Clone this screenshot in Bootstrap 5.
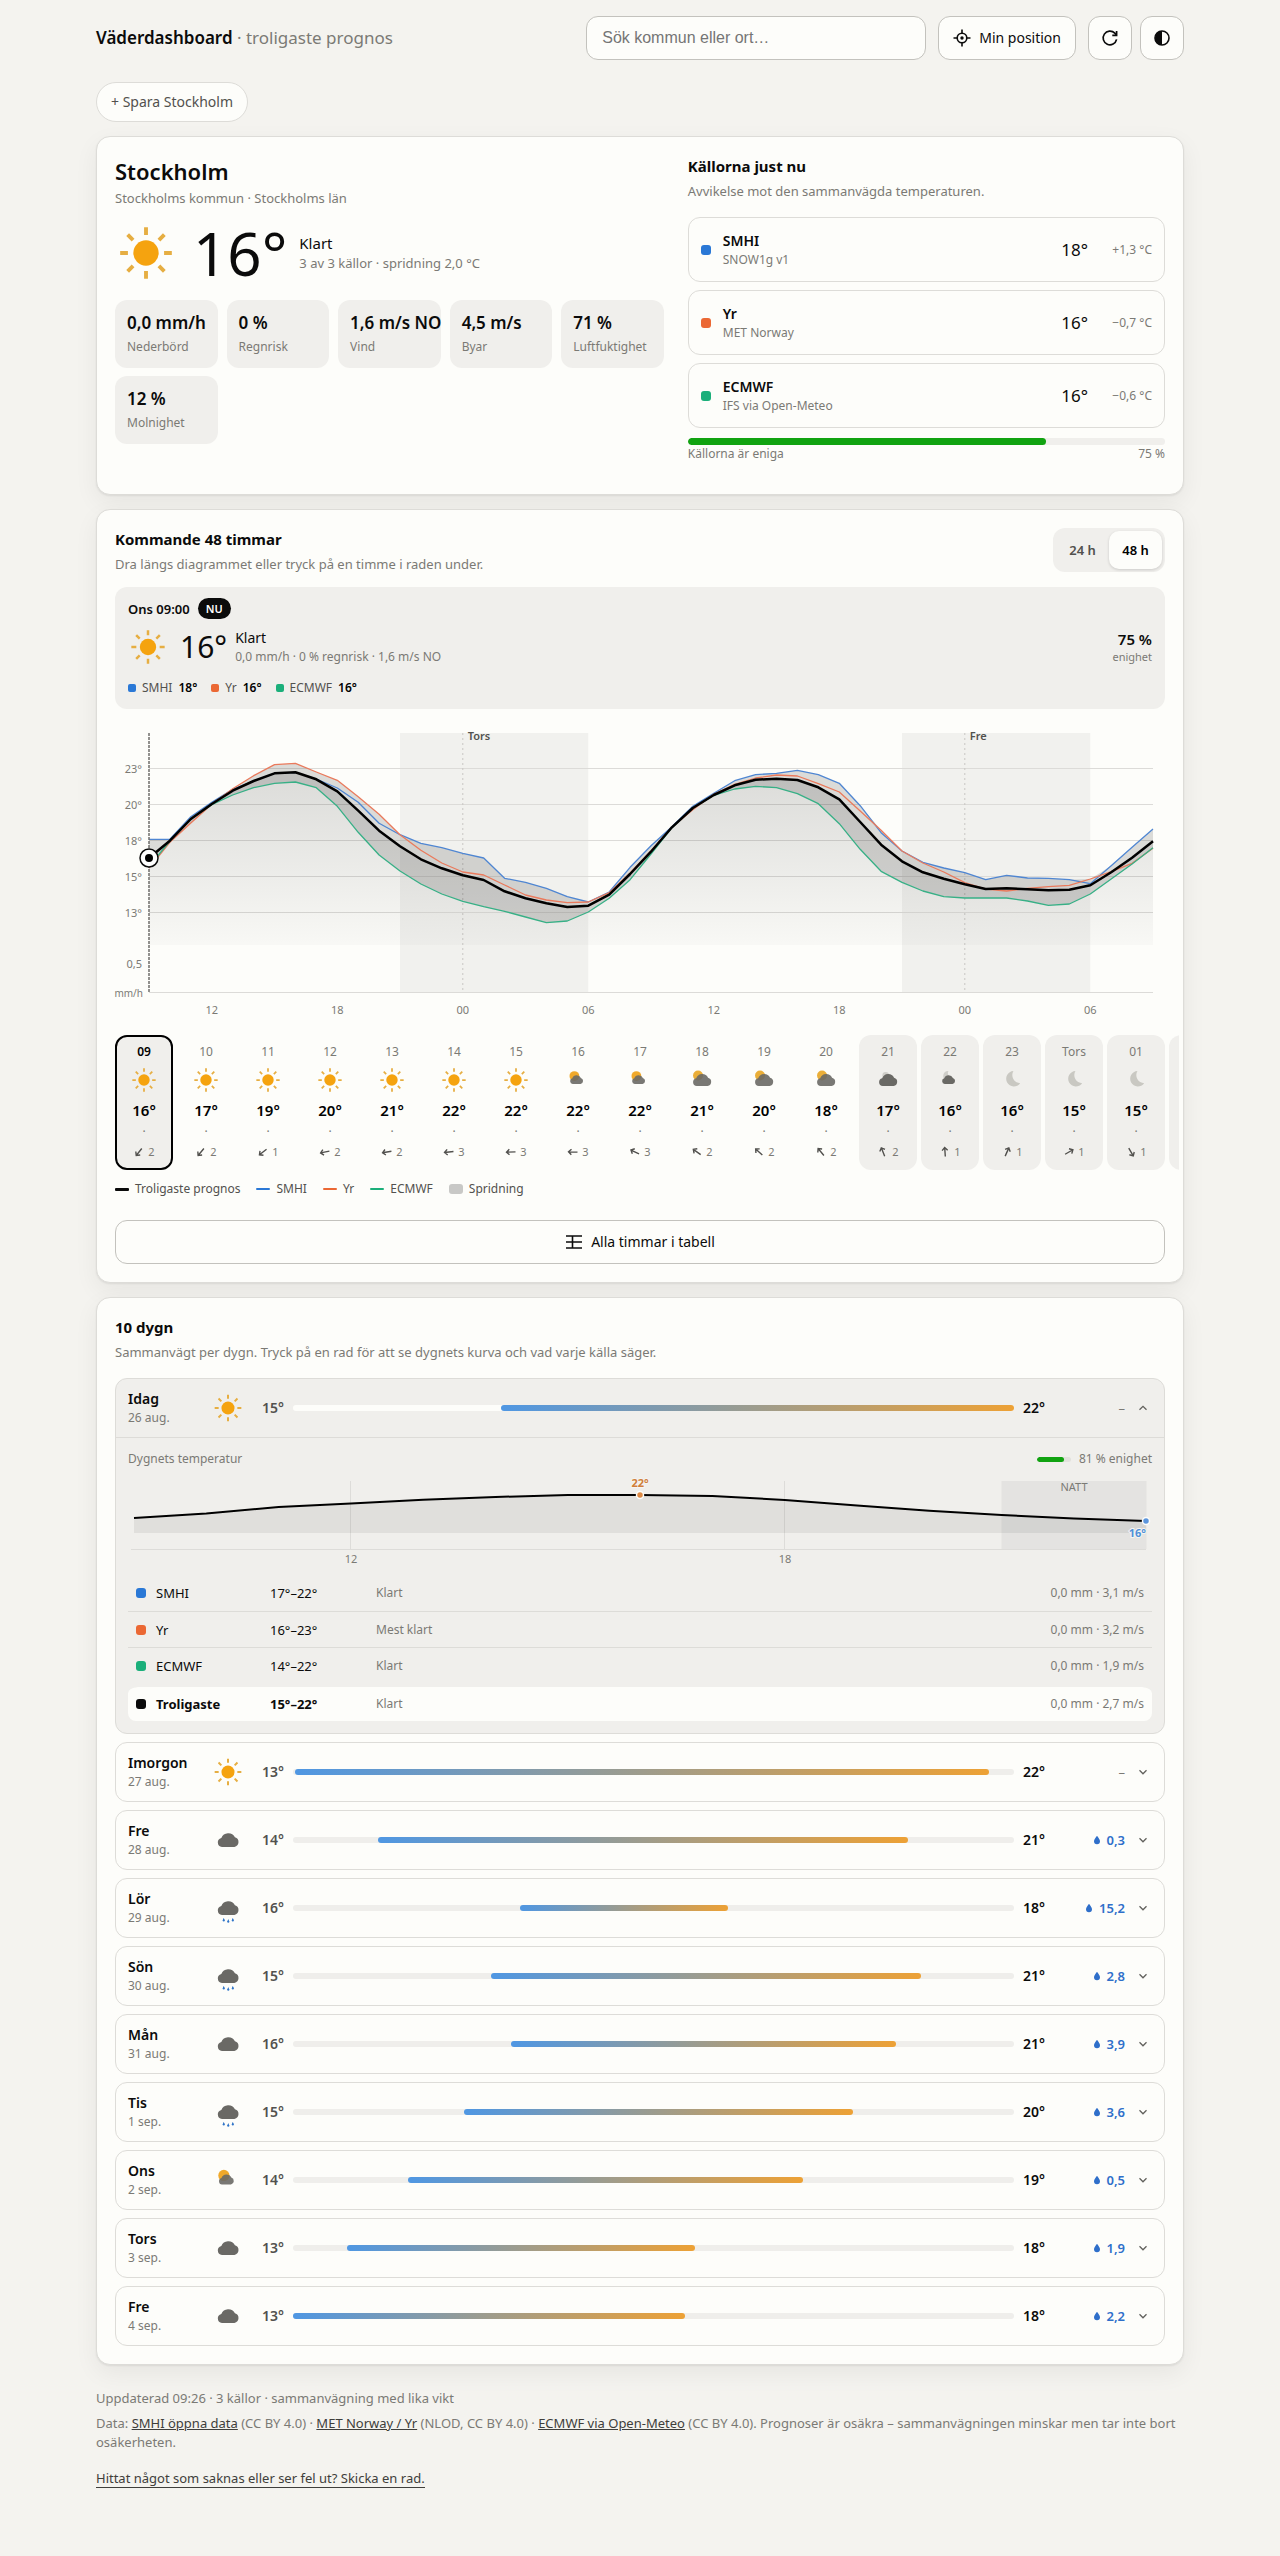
<!DOCTYPE html>
<html lang="sv">
<head>
<meta charset="utf-8">
<meta name="viewport" content="width=device-width, initial-scale=1">
<title>Väderdashboard · Stockholm</title>
<link href="https://cdn.jsdelivr.net/npm/bootstrap@5.3.0/dist/css/bootstrap.min.css" rel="stylesheet">
<style>
:root{--page:#f4f3ef;--surface:#fdfdfa;--panel:#f0efec;--ink:#0b0b0b;--ink2:#52514e;--muted:#7b7a75;--line:#dddcd8;--line2:#c3c2bd;
--smhi:#2a78d6;--yr:#eb6834;--ecmwf:#1baf7a;--good:#11a311;--warm:#f5a30f;--strong:650}
body{background:var(--page);color:var(--ink);font-family:"Noto Sans",sans-serif;font-size:14px;line-height:20px}
.shell{max-width:1120px;padding:16px 16px 64px}
h1,h2,p{margin:0}
svg{display:block;flex:none}
.brand-name{font-size:17px;line-height:26px}
.fw-strong{font-weight:var(--strong)}
.txt-muted{color:var(--muted)}
.txt-2{color:var(--ink2)}
.fs-11{font-size:11px;line-height:16px}
.fs-12{font-size:12px;line-height:18px}
.fs-13{font-size:13px;line-height:20px}
.search-box{width:340px}
.search-box .form-control{height:44px;border:1px solid var(--line2);border-radius:12px;background:var(--surface);font:16px "Liberation Sans",sans-serif;padding:0 15px}
.search-box .form-control::placeholder{color:#757575}
.ctl{height:44px;border:1px solid var(--line2);border-radius:12px;background:var(--surface);color:var(--ink);font-size:14px;line-height:20px;padding:0 14px;display:flex;align-items:center;justify-content:center;gap:8px}
.ctl-square{width:44px;padding:0}
.chip{height:40px;border:1px solid var(--line);border-radius:20px;background:var(--surface);color:var(--ink2);font-size:14px;line-height:20px;padding:0 14px;margin:22px 0 14px}
.panel{background:var(--surface);border:1px solid var(--line);border-radius:14px;padding:18px;margin-bottom:14px;box-shadow:0 1px 2px rgba(11,11,11,.07),0 8px 24px rgba(11,11,11,.06)}
.place{font-size:22px;line-height:33px;font-weight:var(--strong)}
.sect{font-size:15px;line-height:23px;font-weight:700;margin-bottom:3px}
.now-grid{display:grid;grid-template-columns:1.15fr 1fr;gap:24px;padding-bottom:31px}
.now-row{display:flex;align-items:center;gap:12px;margin:14px 0 16px}
.big-temp{font-size:60px;line-height:60px}
.cond{font-size:15px;line-height:20px}
.facts{display:grid;grid-template-columns:repeat(5,minmax(0,1fr));gap:8px 9px}
.fact{background:var(--panel);border-radius:12px;padding:10px 12px;height:68px;white-space:nowrap;display:flex;flex-direction:column-reverse;justify-content:flex-end}
.fact dt{font-size:12px;line-height:18px;font-weight:400;color:var(--muted);margin-top:2px}
.fact dd{font-size:17px;line-height:26px;font-weight:600;margin:0}
.src{border:1px solid var(--line);border-radius:12px;padding:12px;display:flex;align-items:center;gap:12px;margin-bottom:8px}
.src-name{font-weight:var(--strong);line-height:21px}
.src-temp{font-size:17px;line-height:24px}
.src-diff{width:52px;text-align:right}
.dot{width:10px;height:10px;border-radius:3px;flex:none}
.dot-8{width:8px;height:8px;border-radius:2px}
.c-smhi{background:var(--smhi)}.c-yr{background:var(--yr)}.c-ecmwf{background:var(--ecmwf)}.c-ink{background:var(--ink)}
.meter{height:7px;border-radius:4px;background:var(--panel);overflow:hidden}
.meter>div{height:100%;border-radius:4px;background:var(--good)}
.meter-wide{margin-top:10px}
.seg{background:var(--panel);border-radius:12px;padding:3px}
.seg button{border:0;width:53px;height:38px;border-radius:10px;background:none;font-size:13px;font-weight:var(--strong);color:var(--ink2);padding:0}
.seg button.on{background:var(--surface);color:#000;box-shadow:0 1px 3px rgba(11,11,11,.16)}
.readout{background:var(--panel);border-radius:12px;padding:11px 13px 12px;margin-top:13px}
.now-badge{background:var(--ink);color:#fff;font-size:11px;line-height:21px;font-weight:var(--strong);border-radius:11px;padding:0 8px}
.mid-temp{font-size:30px;line-height:40px}
.src-now{display:flex;gap:14px}
.src-now span{display:flex;align-items:center;gap:6px}
.chart{width:100%;height:auto;font-family:"Noto Sans",sans-serif;font-size:11px;margin:12px 0;overflow:visible}
.chart text{fill:var(--muted)}
.strip{display:flex;gap:4px;margin:0 -14px;padding:0 14px;overflow-x:auto;scrollbar-width:none}
.strip::-webkit-scrollbar{display:none}
.hour{flex:none;width:58px;height:135px;border:2px solid transparent;border-radius:12px;background:none;padding:6px 0 0;display:flex;flex-direction:column;align-items:center;color:var(--muted);font-size:12px;line-height:18px}
.hour.night,.hour.sel{background:var(--panel)}
.hour.sel{border-color:#000}
.hour.sel .hh{color:#000;font-weight:var(--strong)}
.hour .deg{font-size:15px;line-height:22px;font-weight:var(--strong);color:#000;margin:5px 0 2px}
.hour .ico{margin-top:5px}
.wind{display:flex;align-items:center;gap:3px;font-size:11px;margin-top:2px}
.legend{display:flex;flex-wrap:wrap;gap:16px;margin:10px 0 22px;color:var(--ink2);font-size:12px;line-height:18px}
.legend span{display:flex;align-items:center;gap:6px}
.key{width:14px;height:2px;border-radius:1px}
.key-main{height:3px}
.key-band{height:10px;border-radius:3px;background:#c8c8c6}
.day{border:1px solid var(--line);border-radius:12px;margin-bottom:8px;overflow:hidden}
.day:last-child{margin-bottom:0}
.day.open{background:var(--panel)}
.day-head{display:grid;grid-template-columns:75px 32px 31px minmax(0,1fr) 34px 59px 18px;column-gap:9px;align-items:center;width:100%;height:58px;padding:0 12px;border:0;background:none;text-align:left;color:var(--ink)}
.day-head b{font-weight:var(--strong)}
.track{height:6px;border-radius:3px;background:#efeeeb}
.open .track{background:var(--surface)}
.fill{height:100%;border-radius:3px;background:linear-gradient(90deg,#4f97e3,#eda135)}
.rain{display:flex;align-items:center;justify-content:flex-end;gap:6px;font-size:13px;font-weight:var(--strong);color:#2f6fca}
.rain.none{color:var(--muted);font-weight:400}
.detail{border-top:1px solid var(--line);padding:12px}
.detail .chart{margin:3px 0 4px}
.mini{width:34px;height:5px;background:#e2e1dd}
.src-table{width:100%;font-size:13px;line-height:20px;border-collapse:separate;border-spacing:0}
.src-table td,.src-table th{height:36px;padding:0 8px 0 0;font-weight:400;border-top:1px solid var(--line)}
.src-table tr:first-child>*{border-top:0}
.src-table th:first-child{padding-left:8px;width:142px}
.src-table th span{display:flex;align-items:center;gap:10px}
.src-table td:nth-child(2){width:106px}
.src-table .best>*{height:38px;border-top:4px solid var(--panel);background:var(--surface);background-clip:padding-box}
.src-table .best>:first-child{border-radius:10px 0 0 8px}
.src-table .best>:last-child{border-radius:0 10px 8px 0}
.src-table .best th,.src-table .best td:nth-child(2){font-weight:700}
footer{font-size:13px;line-height:19px;color:var(--muted);margin-top:24px}
footer p{margin-bottom:6px}
footer a{color:#3f3e3b}
footer .tip{display:inline-block;margin-top:12px;text-decoration:none;border-bottom:1px solid #3f3e3b;line-height:17px}
@media (max-width:800px){.now-grid{grid-template-columns:1fr}.search-box{width:100%}.facts{grid-template-columns:repeat(3,1fr)}}
</style>
</head>
<body>
<svg width="0" height="0" class="position-absolute" aria-hidden="true">
 <defs>
  <path id="cloud" fill="#6a6965" d="M7.5 17.2a3.4 3.4 0 0 1-.5-6.7 5.6 5.6 0 0 1 10.2-.5 3.7 3.7 0 0 1-.4 7.2z"/>
  <path id="cloudSmall" fill="#6a6965" d="M7.500 15.400a2.500 2.500 0 0 1-.4-4.900 4 4 0 0 1 7.400-.3 2.700 2.700 0 0 1-.3 5.200z"/>
  <path id="moonShape" fill="#c9c8c2" d="M13.200 4.300a6.600 6.600 0 1 0 5.800 10.400 6.900 6.900 0 0 1-5.800-10.400z"/>
  <symbol id="sun" viewBox="0 0 24 24"><circle cx="12" cy="12" r="4.9" fill="#f5a30f"/><path stroke="#e6ae42" stroke-width="1.5" fill="none" d="M12 2v3M12 19v3M2 12h3M19 12h3M4.9 4.9 7 7M17 17l2.1 2.1M4.9 19.1 7 17M17 7l2.1-2.1"/></symbol>
  <symbol id="partly" viewBox="0 0 24 24"><circle cx="8.9" cy="8.6" r="4.2" fill="#f0a92a"/><use href="#cloudSmall" opacity=".9"/></symbol>
  <symbol id="mostly" viewBox="0 0 24 24"><circle cx="8.6" cy="8.2" r="4.3" fill="#eaae38"/><use href="#cloud" opacity=".9"/></symbol>
  <symbol id="cloudy" viewBox="0 0 24 24"><use href="#cloud"/></symbol>
  <symbol id="nightcloudy" viewBox="0 0 24 24"><circle cx="10" cy="8" r="2.8" fill="#cfcec9"/><use href="#cloud"/></symbol>
  <symbol id="nightpartly" viewBox="0 0 24 24"><path fill="#cfcec9" d="M10.6 4.200a4.200 4.200 0 1 0 3.400 6.400A4.400 4.400 0 0 1 10.600 4.200z"/><use href="#cloudSmall"/></symbol>
  <symbol id="moon" viewBox="0 0 24 24"><use href="#moonShape"/></symbol>
  <symbol id="rainy" viewBox="0 0 24 24"><use href="#cloud"/><g fill="#2f74c8"><path d="M8.800 19.400 9.600 21.400H8zM12.200 20.200 13 22.300H11.400zM15.600 19.400 16.400 21.400H14.800z"/><circle cx="8.8" cy="21.4" r=".8"/><circle cx="12.2" cy="22.3" r=".8"/><circle cx="15.6" cy="21.4" r=".8"/></g></symbol>
  <symbol id="arrow" viewBox="0 0 12 12"><path d="M6 10.500v-9M3.200 4.400 6 1.500l2.800 2.900" fill="none" stroke="#52514e" stroke-width="1.4"/></symbol>
 </defs>
</svg>

<div class="container-fluid shell">
 <header class="d-flex flex-wrap align-items-center">
  <div class="brand-name me-auto"><span class="fw-strong">Väderdashboard</span> <span class="txt-muted">· troligaste prognos</span></div>
  <div class="search-box me-2"><input id="q" type="search" class="form-control" aria-label="Sök kommun eller ort" placeholder="Sök kommun eller ort…"></div>
  <div class="d-flex gap-2 ms-1">
   <button type="button" class="ctl me-1"><svg width="18" height="18" viewBox="0 0 18 18" fill="none" stroke="#0b0b0b" stroke-width="1.6"><circle cx="9" cy="9" r="4.8"/><path d="M9 .5V4M9 14v3.5M.5 9H4M14 9h3.5"/><circle cx="9" cy="9" r="1.7" fill="#0b0b0b" stroke="none"/></svg>Min position</button>
   <button type="button" class="ctl ctl-square" aria-label="Uppdatera"><svg width="18" height="18" viewBox="0 0 18 18" fill="none" stroke="#0b0b0b" stroke-width="1.7"><path d="M15.6 10.4A6.8 6.8 0 1 1 13.8 4.2L15.3 5.8"/><path d="M15.6 2v4.3h-4.3"/></svg></button>
   <button type="button" class="ctl ctl-square" aria-label="Byt tema"><svg width="18" height="18" viewBox="0 0 18 18"><circle cx="9" cy="9" r="7" fill="none" stroke="#0b0b0b" stroke-width="1.6"/><path d="M9 2a7 7 0 0 0 0 14z" fill="#0b0b0b"/></svg></button>
  </div>
 </header>
 <button type="button" class="chip d-block">+ Spara Stockholm</button>

 <main>
 <section class="panel now-grid">
  <div>
   <h1 class="place">Stockholm</h1>
   <p class="fs-13 txt-muted">Stockholms kommun · Stockholms län</p>
   <div class="now-row">
    <svg class="me-1" width="62" height="62"><use href="#sun"/></svg>
    <div class="big-temp">16°</div>
    <div><div class="cond">Klart</div><div class="fs-13 txt-muted">3 av 3 källor · spridning 2,0 °C</div></div>
   </div>
   <dl class="facts mb-0">
    <div class="fact"><dt>Nederbörd</dt><dd>0,0 mm/h</dd></div>
    <div class="fact"><dt>Regnrisk</dt><dd>0 %</dd></div>
    <div class="fact"><dt>Vind</dt><dd>1,6 m/s NO</dd></div>
    <div class="fact"><dt>Byar</dt><dd>4,5 m/s</dd></div>
    <div class="fact"><dt>Luftfuktighet</dt><dd>71 %</dd></div>
    <div class="fact"><dt>Molnighet</dt><dd>12 %</dd></div>
   </dl>
  </div>
  <div>
   <h2 class="sect">Källorna just nu</h2>
   <p class="fs-13 txt-muted mb-3">Avvikelse mot den sammanvägda temperaturen.</p>
   <div class="src"><span class="dot c-smhi"></span><div class="me-auto"><div class="src-name">SMHI</div><div class="fs-12 txt-muted">SNOW1g v1</div></div><div class="src-temp">18°</div><div class="fs-12 txt-muted src-diff">+1,3 °C</div></div>
   <div class="src"><span class="dot c-yr"></span><div class="me-auto"><div class="src-name">Yr</div><div class="fs-12 txt-muted">MET Norway</div></div><div class="src-temp">16°</div><div class="fs-12 txt-muted src-diff">−0,7 °C</div></div>
   <div class="src"><span class="dot c-ecmwf"></span><div class="me-auto"><div class="src-name">ECMWF</div><div class="fs-12 txt-muted">IFS via Open-Meteo</div></div><div class="src-temp">16°</div><div class="fs-12 txt-muted src-diff">−0,6 °C</div></div>
   <div class="meter meter-wide"><div style="width:75%"></div></div>
   <div class="d-flex justify-content-between fs-12 txt-muted"><span>Källorna är eniga</span><span>75 %</span></div>
  </div>
 </section>

 <section class="panel">
  <div class="d-flex justify-content-between align-items-start">
   <div><h2 class="sect">Kommande 48 timmar</h2><p class="fs-13 txt-muted">Dra längs diagrammet eller tryck på en timme i raden under.</p></div>
   <div class="seg d-flex" role="group" aria-label="Tidsspann"><button type="button">24 h</button><button type="button" class="on">48 h</button></div>
  </div>
  <div class="readout">
   <div class="d-flex align-items-center gap-2"><span class="fs-13 fw-strong">Ons 09:00</span><span class="now-badge">NU</span></div>
   <div class="d-flex align-items-center mt-2">
    <svg width="40" height="40"><use href="#sun"/></svg>
    <div class="mid-temp ms-2 ps-1">16°</div>
    <div class="ms-2 me-auto"><div>Klart</div><div class="fs-12 txt-muted">0,0 mm/h · 0 % regnrisk · 1,6 m/s NO</div></div>
    <div class="text-end"><div class="cond fw-strong">75 %</div><div class="fs-11 txt-muted">enighet</div></div>
   </div>
   <div class="src-now fs-12 mt-2 pt-1 txt-2" id="srcNow"></div>
  </div>
  <svg class="chart" id="chart48" viewBox="0 0 1050 302" role="img" aria-label="Temperatur kommande 48 timmar"></svg>
  <div class="strip" id="strip"></div>
  <div class="legend">
   <span><i class="key key-main c-ink"></i>Troligaste prognos</span><span><i class="key c-smhi"></i>SMHI</span><span><i class="key c-yr"></i>Yr</span><span><i class="key c-ecmwf"></i>ECMWF</span><span><i class="key key-band"></i>Spridning</span>
  </div>
  <button type="button" class="ctl w-100"><svg width="18" height="18" viewBox="0 0 18 18" fill="none" stroke="#0b0b0b" stroke-width="1.6"><path d="M1 3h16M1 9h16M1 15h16M7.5 3v12"/></svg>Alla timmar i tabell</button>
 </section>

 <section class="panel">
  <h2 class="sect">10 dygn</h2>
  <p class="fs-13 txt-muted mb-3">Sammanvägt per dygn. Tryck på en rad för att se dygnets kurva och vad varje källa säger.</p>
  <div id="days"></div>
 </section>
 </main>

 <footer>
  <p>Uppdaterad 09:26 · 3 källor · sammanvägning med lika vikt</p>
  <p>Data: <a href="#">SMHI öppna data</a> (CC BY 4.0) · <a href="#">MET Norway / Yr</a> (NLOD, CC BY 4.0) · <a href="#">ECMWF via Open-Meteo</a> (CC BY 4.0). Prognoser är osäkra – sammanvägningen minskar men tar inte bort osäkerheten.</p>
  <a class="tip" href="#">Hittat något som saknas eller ser fel ut? Skicka en rad.</a>
 </footer>
</div>

<template id="todayDetail">
 <div class="detail">
  <div class="d-flex align-items-center fs-12 txt-muted"><span class="me-auto">Dygnets temperatur</span><div class="meter mini me-2"><div style="width:81%"></div></div><span>81 % enighet</span></div>
  <svg class="chart" id="chartDay" viewBox="0 0 1024 100" role="img" aria-label="Dygnets temperatur"></svg>
  <table class="src-table">
   <tbody>
   <tr><th scope="row"><span><i class="dot c-smhi"></i>SMHI</span></th><td>17°–22°</td><td class="fs-12 txt-muted">Klart</td><td class="fs-12 txt-muted text-end">0,0 mm · 3,1 m/s</td></tr>
   <tr><th scope="row"><span><i class="dot c-yr"></i>Yr</span></th><td>16°–23°</td><td class="fs-12 txt-muted">Mest klart</td><td class="fs-12 txt-muted text-end">0,0 mm · 3,2 m/s</td></tr>
   <tr><th scope="row"><span><i class="dot c-ecmwf"></i>ECMWF</span></th><td>14°–22°</td><td class="fs-12 txt-muted">Klart</td><td class="fs-12 txt-muted text-end">0,0 mm · 1,9 m/s</td></tr>
   <tr class="best"><th scope="row"><span><i class="dot c-ink"></i>Troligaste</span></th><td>15°–22°</td><td class="fs-12 txt-muted">Klart</td><td class="fs-12 txt-muted text-end">0,0 mm · 2,7 m/s</td></tr>
   </tbody>
  </table>
 </div>
</template>

<script src="https://cdn.jsdelivr.net/npm/bootstrap@5.3.0/dist/js/bootstrap.bundle.min.js"></script>
<script>
const el = id => document.getElementById(id);

el('srcNow').innerHTML = [['smhi','SMHI','18°'],['yr','Yr','16°'],['ecmwf','ECMWF','16°']].map(([c,n,t]) =>
  `<span><i class="dot dot-8 c-${c}"></i>${n}<b class="fw-strong text-black">${t}</b></span>`).join('');

/* 48 h chart: one value per hour, in thirds of a pixel from the top */
const best = [417,365,300,255,215,186,163,160,181,217,275,335,382,421,448,469,483,517,538,553,564,560,527,465,398,325,267,228,199,182,179,183,205,241,309,377,427,460,479,496,510,508,511,514,512,499,460,416,367];
const smhi = [361,361,293,250,211,186,163,160,180,207,250,313,347,373,386,403,417,478,490,508,533,549,519,445,380,323,262,223,185,167,163,154,167,193,260,341,396,430,447,461,482,469,477,478,482,494,440,385,330];
const yr = [447,370,312,256,209,170,137,133,159,184,233,286,347,394,432,459,468,498,528,543,551,549,521,462,396,325,272,226,196,177,168,171,194,219,276,334,396,432,459,491,510,516,508,503,499,480,458,433,388];
const ecmwf = [443,366,300,257,228,206,193,189,206,262,340,408,456,495,525,547,563,577,594,611,606,579,538,482,405,326,268,229,210,202,206,224,254,314,391,457,490,516,533,537,537,537,546,559,555,525,480,435,386];
const X = i => (34 + i * 1004 / 48).toFixed(1), Y = v => (v / 3 - 2).toFixed(1);
const pts = a => a.map((v, i) => X(i) + ',' + Y(v)).join(' ');
const hi = best.map((_, i) => Math.min(smhi[i], yr[i], ecmwf[i]));
const lo = best.map((_, i) => Math.max(smhi[i], yr[i], ecmwf[i]));
const band = pts(hi) + ' ' + lo.map((v, i) => X(i) + ',' + Y(v)).reverse().join(' ');
const line = (a, c, w) => `<polyline points="${pts(a)}" fill="none" stroke="${c}" stroke-width="${w}" stroke-linejoin="round"/>`;
let s = '<defs><linearGradient id="g1" x1="0" y1="50" x2="0" y2="224" gradientUnits="userSpaceOnUse"><stop offset="0" stop-color="#0b0b0b" stop-opacity=".14"/><stop offset="1" stop-color="#0b0b0b" stop-opacity=".02"/></linearGradient></defs>';
s += [[12,21],[36,45]].map(([a,b]) => `<rect x="${X(a)}" y="12" width="${X(b)-X(a)}" height="260" fill="#0b0b0b" opacity=".05"/>`).join('');
s += [['23°',48],['20°',84],['18°',120],['15°',156],['13°',192]].map(([t,y]) => `<path d="M34 ${y-.5}H1038" stroke="#dcdbd8"/><text x="27" y="${y+4}" text-anchor="end">${t}</text>`).join('');
s += '<path d="M34 271.5H1038" stroke="#dcdbd8"/><text x="27" y="247" text-anchor="end">0,5</text><text x="28" y="276" text-anchor="end" font-size="10">mm/h</text>';
s += [[15,'Tors'],[39,'Fre']].map(([i,t]) => `<path d="M${X(i)} 12V272" stroke="#c8c7c3" stroke-dasharray="2 3"/><text x="${+X(i)+5}" y="19" font-weight="650" style="fill:#52514e">${t}</text>`).join('');
s += [3,9,15,21,27,33,39,45].map(i => `<text x="${X(i)}" y="293" text-anchor="middle">${String((9+i)%24).padStart(2,'0')}</text>`).join('');
s += `<polygon points="34,224 ${pts(best)} 1038,224" fill="url(#g1)"/><polygon points="${band}" fill="#0b0b0b" opacity=".14"/>`;
s += line(smhi,'#4f86d2',1.3) + line(yr,'#ea7a5c',1.3) + line(ecmwf,'#37b086',1.3) + line(best,'#000',2.5);
s += '<path d="M34 12V272" stroke="#6f6e6b" stroke-width="1.5" stroke-dasharray="3 1"/><circle cx="34" cy="137" r="9" fill="#fff" stroke="#0b0b0b" stroke-width="1.5"/><circle cx="34" cy="137" r="4" fill="#000"/>';
el('chart48').innerHTML = s;

const hours = [['09','sun',16,218,2],['10','sun',17,220,2],['11','sun',19,232,1],['12','sun',20,258,2],['13','sun',21,260,2],['14','sun',22,264,3],['15','sun',22,268,3],['16','partly',22,272,3],['17','partly',22,296,3],['18','mostly',21,305,2],['19','mostly',20,312,2],['20','mostly',18,320,2],['21','nightcloudy',17,338,2],['22','nightpartly',16,356,1],['23','moon',16,24,1],['Tors','moon',15,60,1],['01','moon',15,150,1],['02','moon',14,160,1]];
el('strip').innerHTML = hours.map(([h,ic,t,d,w], i) => `<button type="button" class="hour${i ? '' : ' sel'}${i > 11 ? ' night' : ''}"><span class="hh">${h}</span><svg class="ico" width="28" height="28"><use href="#${ic}"/></svg><span class="deg">${t}°</span><span>·</span><span class="wind"><svg width="12" height="12" viewBox="0 0 12 12"><g transform="rotate(${d} 6 6)"><use href="#arrow" width="12" height="12"/></g></svg>${w}</span></button>`).join('');

/* day rows: low, high and the bar's start and end in percent of the ten-day span */
const days = [['Idag','26 aug.','sun',15,22,28.9,100,''],['Imorgon','27 aug.','sun',13,22,.3,96.5,''],['Fre','28 aug.','cloudy',14,21,11.8,85.3,'0,3'],['Lör','29 aug.','rainy',16,18,31.5,60.3,'15,2'],['Sön','30 aug.','rainy',15,21,27.5,87.1,'2,8'],['Mån','31 aug.','cloudy',16,21,30.3,83.7,'3,9'],['Tis','1 sep.','rainy',15,20,23.7,77.7,'3,6'],['Ons','2 sep.','partly',14,19,15.9,70.7,'0,5'],['Tors','3 sep.','cloudy',13,18,7.5,55.8,'1,9'],['Fre','4 sep.','cloudy',13,18,0,54.3,'2,2']];
const chev = up => `<svg class="mx-auto" width="10" height="10" viewBox="0 0 10 10" fill="none" stroke="#62615d" stroke-width="1.3"><path d="${up ? 'M1.5 6.8 5 3.3l3.5 3.5' : 'M1.5 3.3 5 6.8l3.5-3.5'}"/></svg>`;
const drop = '<svg width="8" height="10" viewBox="0 0 8 10"><path d="M4 .8C5.5 3 7 4.6 7 6.3a3 3 0 0 1-6 0C1 4.6 2.5 3 4 .8z" fill="#2f6fca"/></svg>';
el('days').innerHTML = days.map(([n,d,ic,l,h,a,b,r], i) => `<div class="day${i ? '' : ' open'}"><button type="button" class="day-head" aria-expanded="${!i}"><span><b class="d-block">${n}</b><span class="fs-12 txt-muted d-block">${d}</span></span><svg width="32" height="32"><use href="#${ic}"/></svg><b class="txt-2 text-end">${l}°</b><span class="track"><span class="fill d-block" style="margin-left:${a}%;width:${(b-a).toFixed(1)}%"></span></span><b>${h}°</b><span class="rain${r ? '' : ' none'}">${r ? drop + r : '–'}</span>${chev(!i)}</button></div>`).join('');
document.querySelector('.day.open').append(el('todayDetail').content);

/* today's curve: one point per hour from 09 to 23 */
const dy = [47,42.5,36,32.5,28.7,26,24,24,25,29,34.5,39.8,44,47.6,50];
const DX = i => 6 + i * 72.3;
const dp = dy.map((v, i) => DX(i).toFixed(1) + ',' + v).join(' ');
el('chartDay').innerHTML = `<rect x="873.5" y="10" width="145" height="68" fill="#0b0b0b" opacity=".05"/><text x="946" y="20" text-anchor="middle">NATT</text>
<path d="M3 78.500H1018M222.500 10V78M656.500 10V78" stroke="#dddcd9" fill="none"/>
<polygon points="6,62 ${dp} 1018,62" fill="#0b0b0b" opacity=".07"/><polyline points="${dp}" fill="none" stroke="#000" stroke-width="2"/>
<text x="223" y="92" text-anchor="middle">12</text><text x="657" y="92" text-anchor="middle">18</text>
<circle cx="512" cy="24" r="3.5" fill="#dd8a45" stroke="#fdfdfa" stroke-width="1.5"/><circle cx="1018" cy="50" r="3.5" fill="#5b95dd" stroke="#fdfdfa" stroke-width="1.5"/>
<g font-weight="700" stroke="#f6f5f2" stroke-width="2" paint-order="stroke"><text x="512" y="16" text-anchor="middle" style="fill:#d07f3c">22°</text><text x="1018" y="66" text-anchor="end" style="fill:#4f90d8">16°</text></g>`;
</script>
</body>
</html>
